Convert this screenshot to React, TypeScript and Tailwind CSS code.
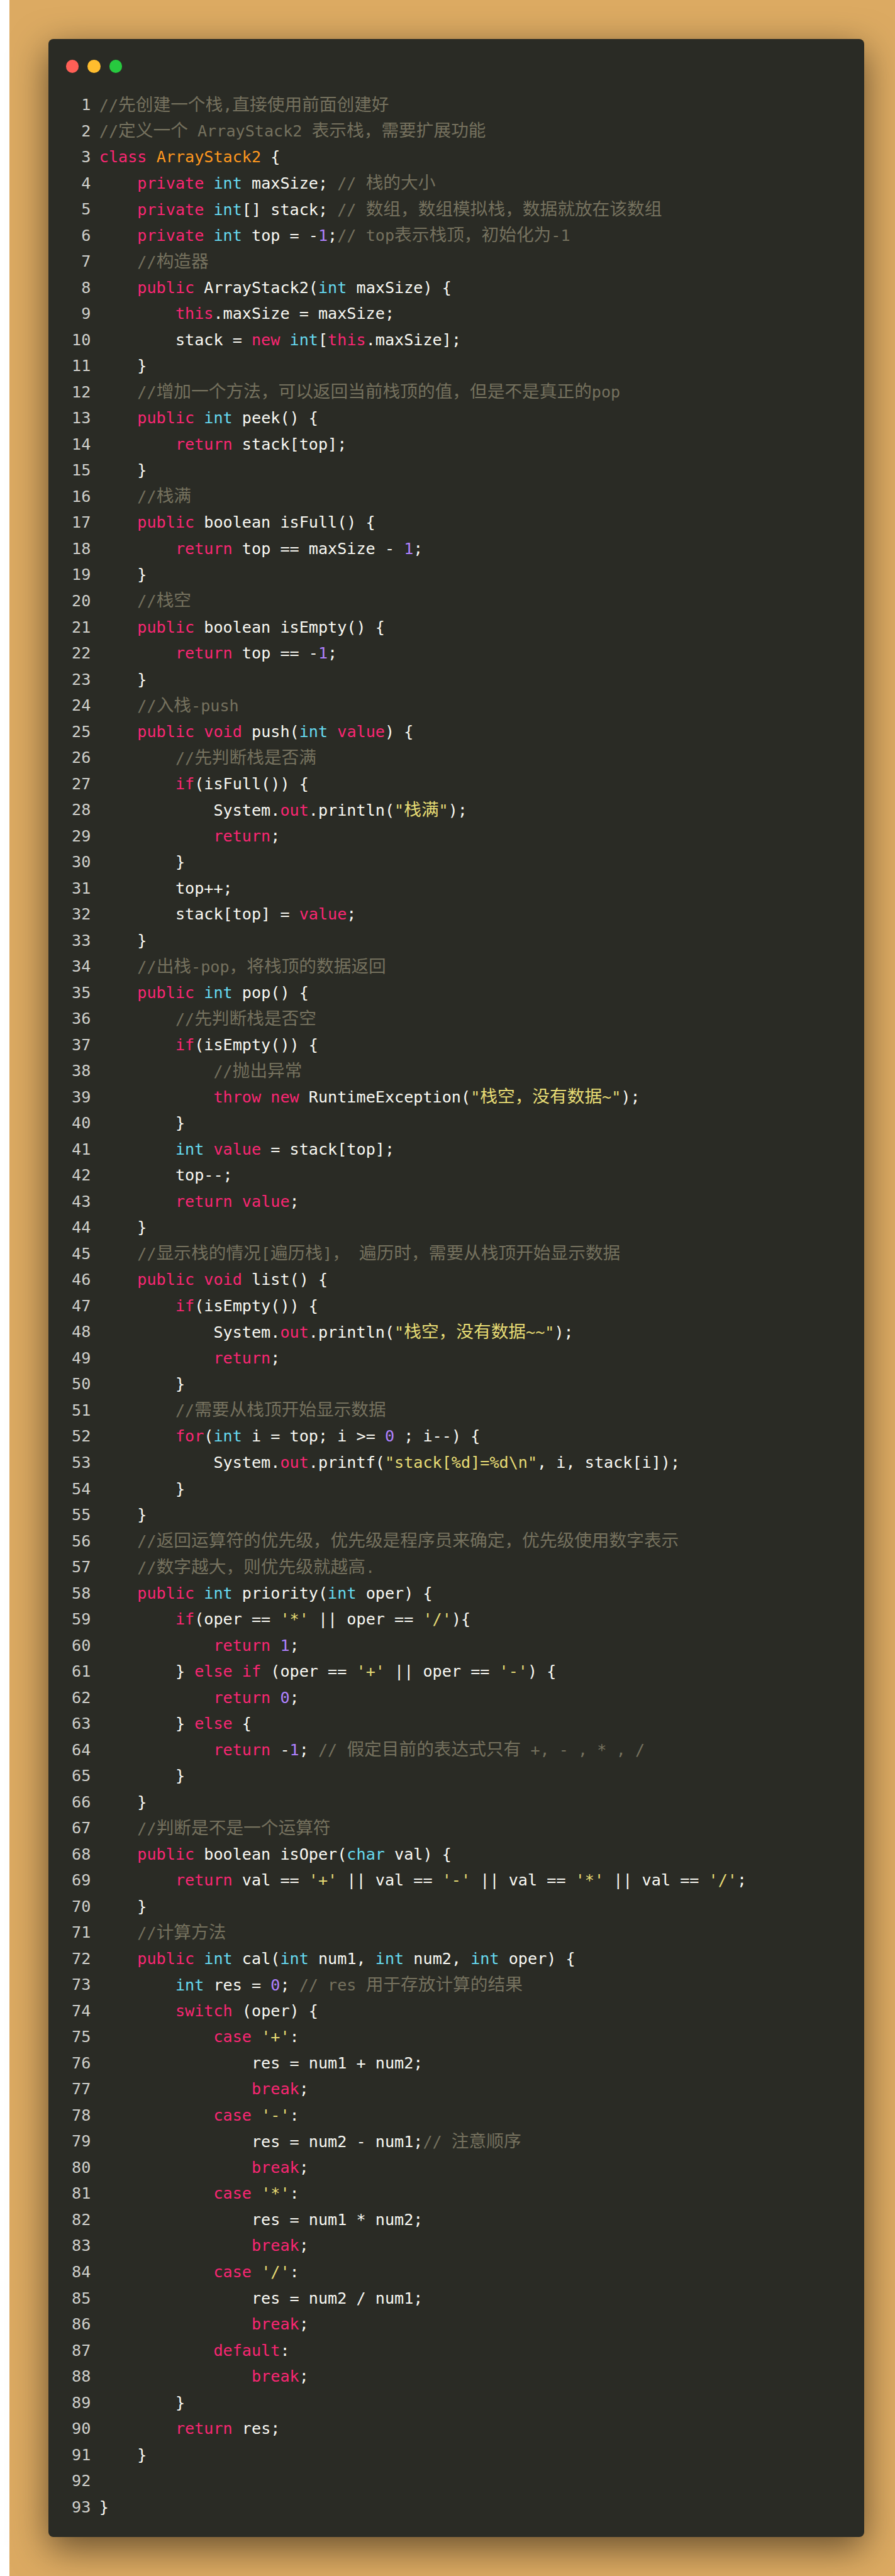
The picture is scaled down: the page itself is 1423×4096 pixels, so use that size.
import React from "react";

// {k|x} keyword, {t|x} type, {n|x} number, {s|x} string, {f|x} class name, {c|x} comment
const code = [
  "{c|//先创建一个栈,直接使用前面创建好}",
  "{c|//定义一个 ArrayStack2 表示栈，需要扩展功能}",
  "{k|class} {f|ArrayStack2} {",
  "    {k|private} {t|int} maxSize; {c|// 栈的大小}",
  "    {k|private} {t|int}[] stack; {c|// 数组，数组模拟栈，数据就放在该数组}",
  "    {k|private} {t|int} top = -{n|1};{c|// top表示栈顶，初始化为-1}",
  "    {c|//构造器}",
  "    {k|public} ArrayStack2({t|int} maxSize) {",
  "        {k|this}.maxSize = maxSize;",
  "        stack = {k|new} {t|int}[{k|this}.maxSize];",
  "    }",
  "    {c|//增加一个方法，可以返回当前栈顶的值，但是不是真正的pop}",
  "    {k|public} {t|int} peek() {",
  "        {k|return} stack[top];",
  "    }",
  "    {c|//栈满}",
  "    {k|public} boolean isFull() {",
  "        {k|return} top == maxSize - {n|1};",
  "    }",
  "    {c|//栈空}",
  "    {k|public} boolean isEmpty() {",
  "        {k|return} top == -{n|1};",
  "    }",
  "    {c|//入栈-push}",
  "    {k|public} {k|void} push({t|int} {k|value}) {",
  "        {c|//先判断栈是否满}",
  "        {k|if}(isFull()) {",
  '            System.{k|out}.println({s|"栈满"});',
  "            {k|return};",
  "        }",
  "        top++;",
  "        stack[top] = {k|value};",
  "    }",
  "    {c|//出栈-pop，将栈顶的数据返回}",
  "    {k|public} {t|int} pop() {",
  "        {c|//先判断栈是否空}",
  "        {k|if}(isEmpty()) {",
  "            {c|//抛出异常}",
  '            {k|throw} {k|new} RuntimeException({s|"栈空，没有数据~"});',
  "        }",
  "        {t|int} {k|value} = stack[top];",
  "        top--;",
  "        {k|return} {k|value};",
  "    }",
  "    {c|//显示栈的情况[遍历栈]， 遍历时，需要从栈顶开始显示数据}",
  "    {k|public} {k|void} list() {",
  "        {k|if}(isEmpty()) {",
  '            System.{k|out}.println({s|"栈空，没有数据~~"});',
  "            {k|return};",
  "        }",
  "        {c|//需要从栈顶开始显示数据}",
  "        {k|for}({t|int} i = top; i >= {n|0} ; i--) {",
  '            System.{k|out}.printf({s|"stack[%d]=%d\\n"}, i, stack[i]);',
  "        }",
  "    }",
  "    {c|//返回运算符的优先级，优先级是程序员来确定，优先级使用数字表示}",
  "    {c|//数字越大，则优先级就越高.}",
  "    {k|public} {t|int} priority({t|int} oper) {",
  "        {k|if}(oper == {s|'*'} || oper == {s|'/'}){",
  "            {k|return} {n|1};",
  "        } {k|else} {k|if} (oper == {s|'+'} || oper == {s|'-'}) {",
  "            {k|return} {n|0};",
  "        } {k|else} {",
  "            {k|return} -{n|1}; {c|// 假定目前的表达式只有 +, - , * , /}",
  "        }",
  "    }",
  "    {c|//判断是不是一个运算符}",
  "    {k|public} boolean isOper({t|char} val) {",
  "        {k|return} val == {s|'+'} || val == {s|'-'} || val == {s|'*'} || val == {s|'/'};",
  "    }",
  "    {c|//计算方法}",
  "    {k|public} {t|int} cal({t|int} num1, {t|int} num2, {t|int} oper) {",
  "        {t|int} res = {n|0}; {c|// res 用于存放计算的结果}",
  "        {k|switch} (oper) {",
  "            {k|case} {s|'+'}:",
  "                res = num1 + num2;",
  "                {k|break};",
  "            {k|case} {s|'-'}:",
  "                res = num2 - num1;{c|// 注意顺序}",
  "                {k|break};",
  "            {k|case} {s|'*'}:",
  "                res = num1 * num2;",
  "                {k|break};",
  "            {k|case} {s|'/'}:",
  "                res = num2 / num1;",
  "                {k|break};",
  "            {k|default}:",
  "                {k|break};",
  "        }",
  "        {k|return} res;",
  "    }",
  "",
  "}",
];

const colors: Record<string, string> = {
  k: "text-[#f92672]",
  t: "text-[#66d9ef]",
  n: "text-[#ae81ff]",
  s: "text-[#e6db74]",
  f: "text-[#fd971f]",
  c: "text-[#75715e]",
};

// the CJK runs are a little wider than the mono font's size
const Cjk = ({ text }: { text: string }) => (
  <>
    {text.split(/([\u3000-\u9fff\uff00-\uffef]+)/).map((part, i) =>
      i % 2 === 1 ? (
        <span key={i} className="text-[27.7px]">
          {part}
        </span>
      ) : (
        part
      )
    )}
  </>
);

const CodeLine = ({ line }: { line: string }) => {
  const parts = line.split(/\{([ktnsfc])\|((?:[^}])*)\}/);
  const out: React.ReactNode[] = [];
  for (let i = 0; i < parts.length; i += 3) {
    if (parts[i]) out.push(<Cjk key={i} text={parts[i]} />);
    if (parts[i + 1]) {
      out.push(
        <span key={i + 1} className={colors[parts[i + 1]]}>
          <Cjk text={parts[i + 2]} />
        </span>
      );
    }
  }
  return <>{out}</>;
};

const App = () => {
  return (
    <main className="flex h-[4096px] w-[1423px] overflow-hidden bg-white">
      <div className="w-[15px] shrink-0" />
      <div className="flex-1 bg-[#dcaa62] pt-[62px] pl-[62px] pr-[49px]">
        <div className="h-[3972px] rounded-[8px] bg-[#2a2b25] pl-[37px] pt-[33px] shadow-[0_17px_59px_rgba(0,0,0,0.55)]">
          <div className="flex gap-[14px]">
            <span className="ml-[-9.5px] h-[20.5px] w-[20.5px] rounded-full bg-[#ff5f56]" />
            <span className="h-[20.5px] w-[20.5px] rounded-full bg-[#ffbd2e]" />
            <span className="h-[20.5px] w-[20.5px] rounded-full bg-[#27c93f]" />
          </div>
          <div className="mt-[30.7px] font-['DejaVu_Sans_Mono','Noto_Sans_CJK_SC',monospace] text-[25.15px] text-[#f8f8f2]">
            {code.map((line, i) => (
              <div key={i} className="flex h-[41.52px] items-center leading-[41.52px]">
                <span className="w-[30.3px] shrink-0 text-right text-[#cfcfca]">{i + 1}</span>
                <span className="ml-[13.5px] whitespace-pre">
                  <CodeLine line={line} />
                </span>
              </div>
            ))}
          </div>
        </div>
      </div>
    </main>
  );
};

export default App;
